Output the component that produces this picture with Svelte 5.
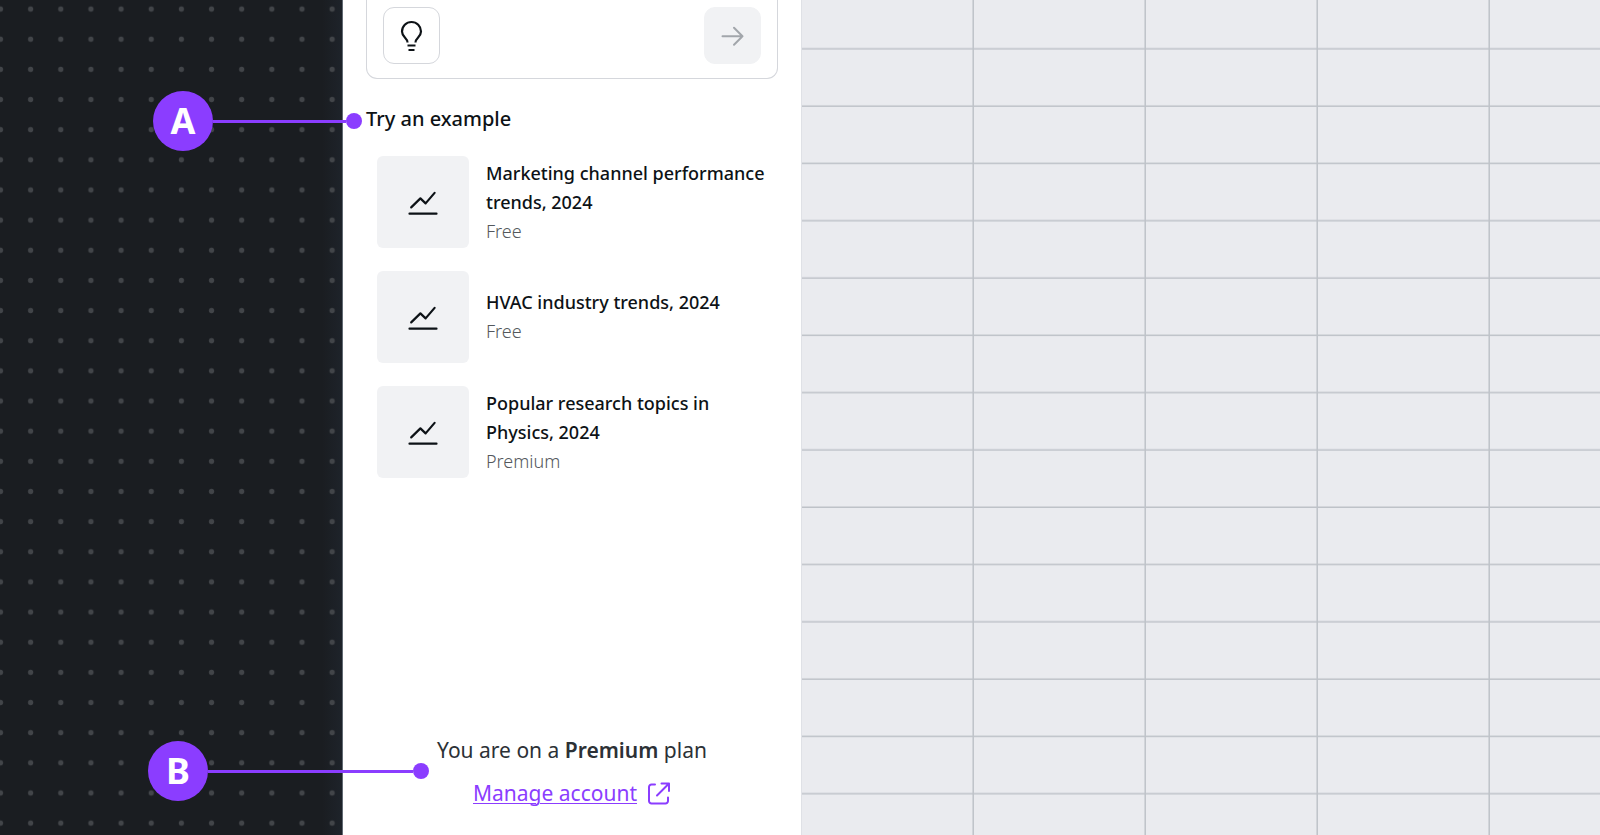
<script>
  const examples = [
    { title: 'Marketing channel performance trends, 2024', tier: 'Free' },
    { title: 'HVAC industry trends, 2024', tier: 'Free' },
    { title: 'Popular research topics in Physics, 2024', tier: 'Premium' }
  ];
</script>

{#snippet callout(letter)}
  <span class="callout callout-{letter.toLowerCase()}">
    <span class="badge">{letter}</span>
    <span class="line"></span>
    <span class="dot"></span>
  </span>
{/snippet}

<main class="app">
  <div class="backdrop">
    <svg width="100%" height="100%" aria-hidden="true">
      <defs>
        <pattern id="dots" x="-14.6" y="-6" width="30.15" height="30.15" patternUnits="userSpaceOnUse">
          <circle cx="15.1" cy="15.1" r="2.6" fill="#424549" />
        </pattern>
      </defs>
      <rect width="100%" height="100%" fill="url(#dots)" />
    </svg>
  </div>

  <aside class="panel">
    <div class="prompt">
      <button class="tool" type="button" aria-label="Ideas">
        <svg width="24" height="32" viewBox="0 0 24 32" fill="none" stroke="currentColor" stroke-width="2.200" aria-hidden="true">
          <path d="M7.500 22.500C7.500 17.500 2 17.200 2 11.500a9.500 9.500 0 0 1 19 0c0 5.700-5.500 6-5.500 11" />
          <path d="M7.500 25.500h8M8.500 30h6" />
        </svg>
      </button>
      <button class="tool send" type="button" aria-label="Send" disabled>
        <svg width="24" height="24" viewBox="0 0 24 24" fill="none" stroke="currentColor" stroke-width="2" stroke-linecap="round" stroke-linejoin="round" aria-hidden="true">
          <path d="M1.500 12.300h20M13 3.800l8.500 8.500L13 20.800" />
        </svg>
      </button>
    </div>

    <section class="examples">
      <h2>{@render callout('A')}Try an example</h2>
      <ul>
        {#each examples as example}
          <li>
            <div class="thumb">
              <svg width="30" height="30" viewBox="0 0 30 30" fill="none" stroke="currentColor" stroke-width="2.200" stroke-linecap="round" stroke-linejoin="round" aria-hidden="true">
                <path d="M3.200 20.400l9.200-9 5.200 5 9-10.500M1.500 26.700h27" />
              </svg>
            </div>
            <div class="info">
              <h3>{example.title}</h3>
              <p>{example.tier}</p>
            </div>
          </li>
        {/each}
      </ul>
    </section>

    <footer>
      {@render callout('B')}
      <p>You are on a <strong>Premium</strong> plan</p>
      <a href="#account">
        <span>Manage account</span>
        <svg width="24" height="24" viewBox="0 0 24 24" fill="none" stroke="currentColor" stroke-width="2" stroke-linecap="round" stroke-linejoin="round" aria-hidden="true">
          <path d="M8 2.500H4.500A2.500 2.500 0 0 0 2 5v14A2.500 2.500 0 0 0 4.500 21.500h14A2.500 2.500 0 0 0 21 19v-3.500M14.500 1.500H22V9M22 1.500l-12 12" />
        </svg>
      </a>
    </footer>
  </aside>

  <div class="sheet">
    <svg width="100%" height="100%" aria-hidden="true">
      <defs>
        <pattern id="cells" y="-7.700" width="172" height="57.300" patternUnits="userSpaceOnUse">
          <path d="M0 56.500H172" stroke="#bec2c8" stroke-width="1.500" />
          <path d="M171.200 0V57.300" stroke="#bec2c8" stroke-width="1.500" />
        </pattern>
      </defs>
      <rect width="100%" height="100%" fill="url(#cells)" />
    </svg>
  </div>
</main>

<style>
  :global(body) {
    margin: 0;
  }

  .app {
    display: grid;
    grid-template-columns: 343fr minmax(458px, 458fr) 799fr;
    min-height: 100vh;
    overflow: hidden;
    font-family: 'Noto Sans', 'Open Sans', sans-serif;
    color: #0d1216;
  }

  .backdrop {
    position: relative;
    background: linear-gradient(to left, #1e232a, #1a1d21 20px);
    border-right: 1px solid #626a73;
    box-sizing: border-box;
  }

  .backdrop svg,
  .sheet svg {
    position: absolute;
    inset: 0;
  }

  .panel {
    position: relative;
    display: flex;
    flex-direction: column;
    padding: 0 23px 25px;
    background: #fff;
  }

  .prompt {
    display: flex;
    justify-content: space-between;
    padding: 7px 16px 14px;
    border: 1px solid #d5d7dc;
    border-top: 0;
    border-radius: 0 0 11px 11px;
  }

  .tool {
    display: grid;
    place-items: center;
    box-sizing: border-box;
    width: 57px;
    height: 57px;
    padding: 0;
    border: 1px solid #d5d7dc;
    border-radius: 11px;
    background: #fff;
    color: #0d1216;
  }

  .send {
    border-color: #f1f2f4;
    background: #f1f2f4;
    color: #a2a6ab;
  }

  h2 {
    position: relative;
    margin: 0;
    padding-top: 24px;
    font-size: 20px;
    line-height: 32px;
    font-weight: 500;
  }

  ul {
    display: flex;
    flex-direction: column;
    gap: 23px;
    margin: 21px 0 0;
    padding: 0 11px;
    list-style: none;
  }

  li {
    display: flex;
    align-items: center;
    gap: 17px;
  }

  .thumb {
    display: grid;
    flex: none;
    place-items: center;
    width: 92px;
    height: 92px;
    border-radius: 6px;
    background: #f1f2f4;
  }

  .info {
    flex: 1;
    margin: -4px 0;
  }

  h3,
  .info p {
    margin: 0;
    font-size: 18px;
    line-height: 29px;
  }

  h3 {
    font-weight: 500;
  }

  .info p {
    color: #54585c;
    font-weight: 340;
  }

  footer {
    position: relative;
    display: flex;
    flex-direction: column;
    align-items: center;
    gap: 10px;
    margin-top: auto;
    font-size: 21px;
    line-height: 33px;
  }

  footer p {
    margin: 0;
    color: #2c3136;
  }

  strong {
    font-weight: 600;
  }

  a {
    display: flex;
    align-items: center;
    gap: 10px;
    color: #8b3dff;
    text-decoration: none;
  }

  a span {
    text-decoration: underline;
    text-decoration-thickness: 1px;
    text-underline-offset: 2px;
  }

  .callout {
    position: absolute;
    display: flex;
    align-items: center;
    color: #fff;
  }

  .callout-a {
    right: 100%;
    bottom: -16px;
    width: 209px;
    margin-right: 4px;
  }

  .callout-b {
    left: -218px;
    top: 7px;
    width: 281px;
  }

  .badge {
    display: grid;
    flex: none;
    place-items: center;
    width: 60px;
    height: 60px;
    border-radius: 50%;
    background: #8b3dff;
    font-size: 36px;
    line-height: 60px;
    font-weight: 700;
  }

  .line {
    flex: 1;
    height: 3px;
    background: #8b3dff;
  }

  .dot {
    flex: none;
    width: 16px;
    height: 16px;
    border-radius: 50%;
    background: #8b3dff;
  }

  .sheet {
    position: relative;
    box-sizing: border-box;
    border-left: 1px solid #dfe1e6;
    background: #eaebef;
  }
</style>
